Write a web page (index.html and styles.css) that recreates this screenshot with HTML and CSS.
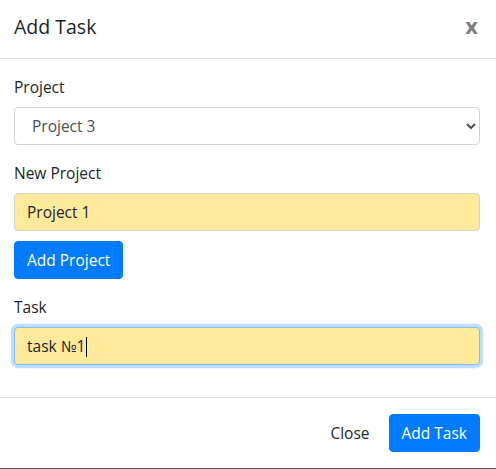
FILE: index.html
```html
<!DOCTYPE html>
<html>
<head>
<meta charset="utf-8">
<link rel="stylesheet" href="styles.css">
</head>
<body>
<div class="modal">
  <div class="modal-header">
    <h5 class="modal-title">Add Task</h5>
    <button class="close" type="button">x</button>
  </div>
  <div class="modal-body">
    <div class="form-group">
      <label class="label">Project</label>
      <select class="form-control select">
        <option>Project 1</option>
        <option>Project 2</option>
        <option selected>Project 3</option>
      </select>
    </div>
    <div class="form-group">
      <label class="label">New Project</label>
      <input class="form-control filled" type="text" value="Project 1">
      <button class="btn btn-primary add-project" type="button">Add Project</button>
    </div>
    <div class="form-group">
      <label class="label">Task</label>
      <div class="input-wrap">
        <input class="form-control filled focused" type="text" value="task №1">
        <div class="caret-layer" aria-hidden="true"><span class="mirror">task №1</span><span class="caret"></span></div>
      </div>
    </div>
  </div>
  <div class="modal-footer">
    <button class="btn btn-plain" type="button">Close</button>
    <button class="btn btn-primary" type="button">Add Task</button>
  </div>
</div>
</body>
</html>
```

FILE: styles.css
```css
* { box-sizing: border-box; }
html, body {
  margin: 0;
  padding: 0;
  background: #fff;
  width: 496px;
  height: 469px;
  overflow: hidden;
}
body {
  font-family: "Open Sans", "Noto Sans", sans-serif;
  font-size: 15.5px;
  line-height: 1.5;
  color: #212529;
}
.modal {
  margin-top: -4px;
  border-bottom: 1px solid #5a5a5a;
}
.modal-header {
  display: flex;
  align-items: flex-start;
  justify-content: space-between;
  padding: 16px 16px 16px 14px;
  border-bottom: 1px solid #dee2e6;
}
.modal-title {
  margin: 0;
  font-size: 19.5px;
  font-weight: 500;
  line-height: 30px;
  color: #212529;
}
.close {
  border: 0;
  background: none;
  padding: 0 2px 0 0;
  margin: -2px 0 0 0;
  font-family: "Open Sans", sans-serif;
  font-size: 22px;
  font-weight: 700;
  line-height: 30px;
  color: #808080;
}
.modal-body {
  padding: 16px 16px 16px 14px;
}
.form-group {
  margin-bottom: 16px;
  display: flex;
  flex-direction: column;
  align-items: flex-start;
}
.label {
  display: block;
  margin-bottom: 8px;
  line-height: 24px;
  color: #212529;
}
.form-control {
  display: block;
  width: 100%;
  height: 38px;
  padding: 6px 12px;
  font-family: inherit;
  font-size: 15.5px;
  line-height: 24px;
  color: #495057;
  background: #fff;
  border: 1px solid #ced4da;
  border-radius: 4px;
  outline: none;
}
.select {
  padding-left: 13px;
  color: #495057;
}
.filled {
  background: #ffe99b;
  color: #212529;
}
.focused {
  border-color: #80bdff;
  box-shadow: 0 0 0 3.2px rgba(0, 123, 255, 0.25);
}
.input-wrap {
  position: relative;
  width: 100%;
}
.caret-layer {
  position: absolute;
  inset: 0;
  padding: 0 13px;
  display: flex;
  align-items: center;
  font-size: 15.5px;
  pointer-events: none;
}
.mirror {
  visibility: hidden;
  white-space: pre;
}
.caret {
  display: inline-block;
  width: 1px;
  height: 20px;
  margin-left: 1px;
  margin-top: 2px;
  background: #000;
}
.btn {
  display: inline-block;
  height: 38px;
  padding: 6px 12px;
  font-family: inherit;
  font-size: 15.5px;
  line-height: 24px;
  border: 1px solid transparent;
  border-radius: 4px;
  cursor: pointer;
}
.btn-primary {
  background: #007bff;
  border-color: #007bff;
  color: #fff;
}
.btn-plain {
  background: transparent;
  color: #212529;
}
.add-project {
  margin-top: 10px;
}
.modal-footer {
  display: flex;
  justify-content: flex-end;
  align-items: center;
  gap: 6px;
  padding: 16px 16px 16px 12px;
  border-top: 1px solid #dee2e6;
  height: 71px;
}
```
